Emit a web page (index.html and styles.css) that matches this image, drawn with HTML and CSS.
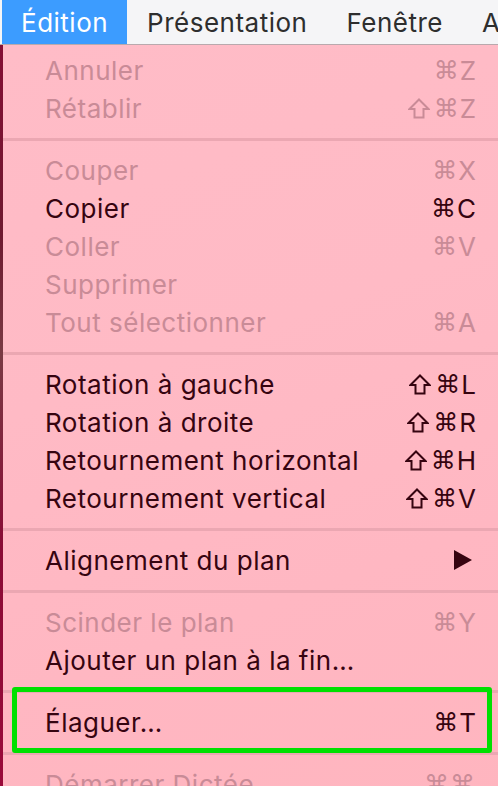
FILE: index.html
```html
<!DOCTYPE html>
<html lang="fr">
<head>
<meta charset="utf-8">
<title>Menu Édition</title>
<link rel="stylesheet" href="styles.css">
</head>
<body>
<div class="screen">
  <div class="menubar">
    <span class="mb-item active">Édition</span>
    <span class="mb-item">Présentation</span>
    <span class="mb-item">Fenêtre</span>
    <span class="mb-item">A</span>
  </div>
  <div class="menu">
    <div class="row off"><span class="label">Annuler</span><span class="key"><span class="cmd">⌘</span>Z</span></div>
    <div class="row off"><span class="label">Rétablir</span><span class="key"><svg class="sh" width="22" height="21" viewBox="0 0 22 21"><path d="M11 1.5 L20.5 11 L15.5 11 L15.5 19.5 L6.5 19.5 L6.5 11 L1.5 11 Z"/></svg><span class="cmd">⌘</span>Z</span></div>
    <div class="sep"></div>
    <div class="row off"><span class="label">Couper</span><span class="key"><span class="cmd">⌘</span>X</span></div>
    <div class="row"><span class="label">Copier</span><span class="key"><span class="cmd">⌘</span>C</span></div>
    <div class="row off"><span class="label">Coller</span><span class="key"><span class="cmd">⌘</span>V</span></div>
    <div class="row off"><span class="label">Supprimer</span><span class="key"></span></div>
    <div class="row off"><span class="label">Tout sélectionner</span><span class="key"><span class="cmd">⌘</span>A</span></div>
    <div class="sep"></div>
    <div class="row"><span class="label">Rotation à gauche</span><span class="key"><svg class="sh" width="22" height="21" viewBox="0 0 22 21"><path d="M11 1.5 L20.5 11 L15.5 11 L15.5 19.5 L6.5 19.5 L6.5 11 L1.5 11 Z"/></svg><span class="cmd">⌘</span>L</span></div>
    <div class="row"><span class="label">Rotation à droite</span><span class="key"><svg class="sh" width="22" height="21" viewBox="0 0 22 21"><path d="M11 1.5 L20.5 11 L15.5 11 L15.5 19.5 L6.5 19.5 L6.5 11 L1.5 11 Z"/></svg><span class="cmd">⌘</span>R</span></div>
    <div class="row"><span class="label">Retournement horizontal</span><span class="key"><svg class="sh" width="22" height="21" viewBox="0 0 22 21"><path d="M11 1.5 L20.5 11 L15.5 11 L15.5 19.5 L6.5 19.5 L6.5 11 L1.5 11 Z"/></svg><span class="cmd">⌘</span>H</span></div>
    <div class="row"><span class="label">Retournement vertical</span><span class="key"><svg class="sh" width="22" height="21" viewBox="0 0 22 21"><path d="M11 1.5 L20.5 11 L15.5 11 L15.5 19.5 L6.5 19.5 L6.5 11 L1.5 11 Z"/></svg><span class="cmd">⌘</span>V</span></div>
    <div class="sep"></div>
    <div class="row"><span class="label">Alignement du plan</span><span class="key"><svg class="arrow" width="18" height="20" viewBox="0 0 18 20"><path d="M0 0 L18 10 L0 20 Z"/></svg></span></div>
    <div class="sep"></div>
    <div class="row off"><span class="label">Scinder le plan</span><span class="key"><span class="cmd">⌘</span>Y</span></div>
    <div class="row"><span class="label">Ajouter un plan à la fin…</span><span class="key"></span></div>
    <div class="sep"></div>
    <div class="row highlight"><span class="label">Élaguer…</span><span class="key"><span class="cmd">⌘</span>T</span><span class="frame"></span></div>
    <div class="sep"></div>
    <div class="row off"><span class="label">Démarrer Dictée</span><span class="key"><span class="cmd">⌘</span><span class="cmd">⌘</span></span></div>
  </div>
</div>
</body>
</html>
```

FILE: styles.css
```css
html, body {
  margin: 0;
  padding: 0;
}
body {
  width: 498px;
  height: 786px;
  overflow: hidden;
  font-family: "Inter", "Liberation Sans", sans-serif;
  background: linear-gradient(180deg, #8a0c36 0%, #6e1a30 30%, #7a3a44 45%, #8a0c36 70%, #9a0a3a 100%);
}
.screen {
  width: 498px;
  height: 786px;
  display: flex;
  flex-direction: column;
}
.menubar {
  height: 44px;
  flex: none;
  display: flex;
  align-items: stretch;
  background: #f5f5f7;
  border-bottom: 1px solid #b9a9ad;
  padding-left: 2px;
}
.mb-item {
  display: flex;
  align-items: center;
  font-size: 26px;
  letter-spacing: 0.5px;
  color: #2e2e2e;
  padding: 0 19px 0 20px;
}
.mb-item.active {
  background: #3c9cff;
  color: #ffffff;
  padding: 0 19px 0 19px;
}
.menu {
  flex: 1;
  margin-left: 3px;
  padding-top: 6px;
  background: linear-gradient(160deg, #ffbcc7 0%, #ffbac5 40%, #ffb7c2 70%, #ffb5bf 100%);
  display: flex;
  flex-direction: column;
}
.row {
  position: relative;
  height: 38px;
  flex: none;
  display: flex;
  align-items: center;
  justify-content: space-between;
  padding: 0 22px 0 42px;
  font-size: 26px;
  color: #360410;
}
.row.off {
  color: #c98b97;
}
.label {
  letter-spacing: 0.5px;
}
.key {
  display: flex;
  align-items: center;
}
.cmd {
  font-family: "DejaVu Sans", sans-serif;
  font-size: 25px;
  margin-right: 1px;
}
.sh {
  fill: none;
  stroke: currentColor;
  stroke-width: 2;
  stroke-linejoin: miter;
  margin-right: 4px;
}
.arrow {
  fill: #360410;
  margin-right: 4px;
}
.sep {
  height: 24px;
  flex: none;
  display: flex;
  align-items: center;
}
.sep::before {
  content: "";
  display: block;
  width: 100%;
  height: 3px;
  background: #eba7b2;
}
.frame {
  position: absolute;
  left: 9px;
  right: 6px;
  top: -16px;
  bottom: -12px;
  border: 5px solid #00e000;
  border-radius: 3px;
}
```
